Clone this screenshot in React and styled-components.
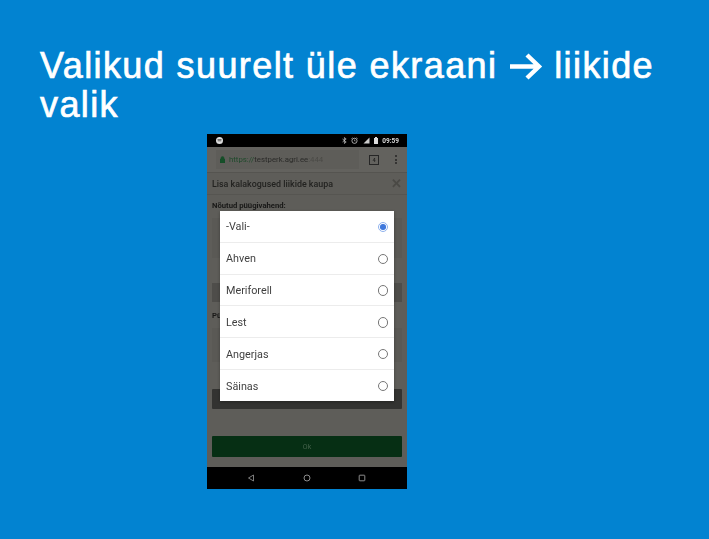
import React from "react";
import styled, { createGlobalStyle } from "styled-components";

const Global = createGlobalStyle`
  html, body { margin: 0; padding: 0; }
  body { background: #0283d1; font-family: "Liberation Sans", Arial, sans-serif; }
`;
const Slide = styled.div`
  width: 709px; height: 539px; background: #0283d1; overflow: hidden;
  display: flex; flex-direction: column; align-items: flex-start;
  padding: 46px 0 0 40px; box-sizing: border-box;
`;
const Title = styled.h1`
  margin: 0; width: 630px; color: #fff; font-size: 36px; font-weight: 400;
  line-height: 39px; letter-spacing: 1.4px; -webkit-text-stroke: 0.7px #fff;
`;
const Arrow = styled.svg`
  width: 34px; height: 29px; vertical-align: -3px;
`;
const Phone = styled.div`
  margin: 10px 0 0 167px; width: 200px; height: 355px; background: #5e5d59;
  display: flex; flex-direction: column; position: relative; overflow: hidden;
  font-family: Roboto, "Liberation Sans", sans-serif;
`;
const StatusBar = styled.div`
  height: 13px; flex: none; background: #000; display: flex; align-items: center;
  justify-content: space-between; padding: 0 8px 0 9px; color: #d8d8d8; filter: blur(.3px);
`;
const StatusRight = styled.div`
  display: flex; align-items: center; gap: 4px; font-size: 6.5px; font-weight: 700;
`;
const UrlBar = styled.div`
  height: 26px; flex: none; background: #63625e; display: flex; align-items: center;
  padding: 0 8px 0 9px; box-sizing: border-box; border-bottom: 1px solid #555450; filter: blur(.35px);
`;
const UrlField = styled.div`
  width: 143px; height: 19px; background: #5e5d59; display: flex; align-items: center;
  gap: 4px; padding-left: 4px; font-size: 7.8px; color: #2a2a28; white-space: nowrap; box-sizing: border-box;
`;
const Https = styled.span` color: #1f4a2b; `;
const Port = styled.span` color: #4b4a46; `;
const TabCount = styled.div`
  margin-left: 10px; width: 8px; height: 8px; border: 1px solid #262626; font-size: 5.5px;
  display: flex; align-items: center; justify-content: center; color: #262626; font-weight: 700;
`;
const Dots = styled.div`
  margin-left: auto; display: flex; flex-direction: column; gap: 1.5px; margin-right: 2px;
`;
const Dot = styled.span`
  width: 2px; height: 2px; background: #262626; border-radius: 50%;
`;
const SheetHead = styled.div`
  height: 21px; flex: none; display: flex; align-items: center; justify-content: space-between;
  padding: 0 5px; font-size: 8.9px; font-weight: 500; color: #222220; border-bottom: 1px solid #565551; filter: blur(.35px);
`;
const Close = styled.span`
  color: #4a4945; font-size: 13px; font-weight: 700; line-height: 1;
`;
const SheetBody = styled.div`
  flex: 1; display: flex; flex-direction: column; padding: 6px 5px 0; filter: blur(.35px);
`;
const Label = styled.div`
  font-size: 7.7px; font-weight: 700; color: #181817; line-height: 9px; margin-top: ${p => p.$top || 0}px;
`;
const GhostField = styled.div`
  margin-top: ${p => p.$top}px; height: ${p => p.$height}px; width: 100%;
  background: ${p => p.$bg}; flex: none;
`;
const DarkButton = styled.div`
  margin-top: 27px; height: 20px; flex: none; background: #333331; color: #555552; border-radius: 1px;
  display: flex; align-items: center; justify-content: center; font-size: 6.5px;
`;
const OkButton = styled.div`
  margin-top: 27px; height: 21px; flex: none; background: #062f14; color: #44624b; border-radius: 1px;
  display: flex; align-items: center; justify-content: center; font-size: 7px;
`;
const NavBar = styled.div`
  height: 22px; flex: none; background: #000; display: flex; align-items: center;
  justify-content: space-between; padding: 0 41px 0 40px;
`;
const NavIcon = styled.svg`
  width: 8px; height: 8px; display: block;
`;
const Dialog = styled.div`
  position: absolute; left: 13px; top: 77px; width: 174px; height: 190px; background: #fff;
  display: flex; flex-direction: column; box-shadow: 0 1px 3px rgba(0,0,0,.3); filter: blur(.25px);
`;
const Row = styled.div`
  flex: 1; display: flex; align-items: center; justify-content: space-between;
  padding: 1px 6px 0 6px; font-size: 10.8px; color: #3f3f3f;
  border-top: ${p => (p.$first ? "none" : "1px solid #ececec")};
`;
const Radio = styled.span`
  width: 8.4px; height: 8.4px; border-radius: 50%; flex: none; box-sizing: content-box;
  border: 1.1px solid ${p => (p.$on ? "#8fb2ee" : "#777")};
  display: flex; align-items: center; justify-content: center;
  &::after {
    content: ""; width: 5.5px; height: 5.5px; border-radius: 50%;
    background: ${p => (p.$on ? "#3f78dc" : "transparent")};
  }
`;

const options = ["-Vali-", "Ahven", "Meriforell", "Lest", "Angerjas", "Säinas"];

export default function App() {
  return (
    <Slide>
      <Global />
      <Title>
        Valikud suurelt üle ekraani{" "}
        <Arrow viewBox="0 0 34 29">
          <path d="M1 14.5H30M18 3L30 14.5L18 26" fill="none" stroke="#fff" strokeWidth="4.4" />
        </Arrow>{" "}
        liikide valik
      </Title>
      <Phone>
        <StatusBar>
          <svg width="7" height="7" viewBox="0 0 7 7">
            <circle cx="3.5" cy="3.5" r="3.5" fill="#ddd" />
            <path d="M1.5 2.6H5.5M1.7 3.8H5.3" stroke="#333" strokeWidth=".7" />
          </svg>
          <StatusRight>
            <svg width="5" height="7" viewBox="0 0 5 7">
              <path d="M0.5 2L4.2 5L2.4 6.5V.5L4.2 2L.5 5" fill="none" stroke="#ccc" strokeWidth=".7" />
            </svg>
            <svg width="7" height="7" viewBox="0 0 7 7">
              <circle cx="3.5" cy="3.8" r="2.6" fill="none" stroke="#ccc" strokeWidth=".8" />
              <path d="M3.5 2.5V3.9H4.6M.4 1.6L1.6.6M6.6 1.6L5.4.6" fill="none" stroke="#ccc" strokeWidth=".6" />
            </svg>
            <svg width="8" height="7" viewBox="0 0 8 7">
              <path d="M7.5 .5V6.5H1.5Z" fill="#ccc" />
            </svg>
            <svg width="4" height="7" viewBox="0 0 4 7">
              <path d="M0 1H1V0H3V1H4V7H0Z" fill="#ddd" />
            </svg>
            <span>09:59</span>
          </StatusRight>
        </StatusBar>
        <UrlBar>
          <UrlField>
            <svg width="5" height="7" viewBox="0 0 5 7">
              <path d="M0 3H5V7H0ZM1 3V2A1.5 1.5 0 0 1 4 2V3" fill="#164f29" stroke="#164f29" strokeWidth=".5" />
            </svg>
            <span>
              <Https>https://</Https>testperk.agri.ee<Port>:444</Port>
            </span>
          </UrlField>
          <TabCount>4</TabCount>
          <Dots>
            <Dot />
            <Dot />
            <Dot />
          </Dots>
        </UrlBar>
        <SheetHead>
          <span>Lisa kalakogused liikide kaupa</span>
          <Close>✕</Close>
        </SheetHead>
        <SheetBody>
          <Label>Nõutud püügivahend:</Label>
          <GhostField $top={8} $height={40} $bg="#5a5955" />
          <GhostField $top={25} $height={19} $bg="#4e4d4a" />
          <Label $top={9}>Püügikoht:</Label>
          <GhostField $top={8} $height={34} $bg="#5a5955" />
          <DarkButton>Lisa uus saak</DarkButton>
          <OkButton>Ok</OkButton>
        </SheetBody>
        <NavBar>
          <NavIcon viewBox="0 0 8 8">
            <path d="M6.5 1V7L1.5 4Z" fill="none" stroke="#8a8a8a" strokeWidth=".9" />
          </NavIcon>
          <NavIcon viewBox="0 0 8 8">
            <circle cx="4" cy="4" r="3" fill="none" stroke="#9a9a9a" strokeWidth=".9" />
          </NavIcon>
          <NavIcon viewBox="0 0 8 8">
            <rect x="1.2" y="1.2" width="5.6" height="5.6" rx=".6" fill="none" stroke="#9a9a9a" strokeWidth=".9" />
          </NavIcon>
        </NavBar>
        <Dialog>
          {options.map((o, i) => (
            <Row key={o} $first={i === 0}>
              <span>{o}</span>
              <Radio $on={i === 0} />
            </Row>
          ))}
        </Dialog>
      </Phone>
    </Slide>
  );
}
